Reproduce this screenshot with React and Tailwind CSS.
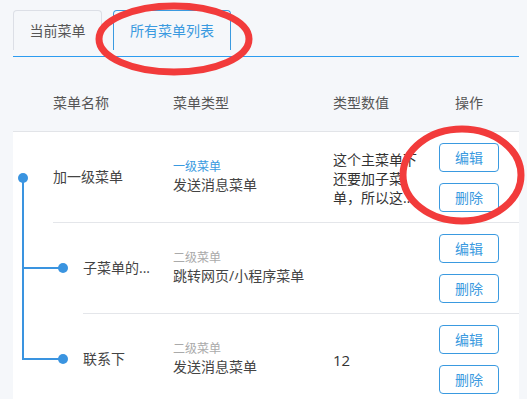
import React from 'react'

const rows = [
    { pad: 40, name: '加一级菜单', level: '一级菜单', levelBlue: true, type: '发送消息菜单', value: '这个主菜单下还要加子菜单，所以这里可以不填写' },
    { pad: 70, name: '子菜单的...', level: '二级菜单', type: '跳转网页/小程序菜单', value: '' },
    { pad: 70, name: '联系下', level: '二级菜单', type: '发送消息菜单', value: '12' },
]

function Tree({ i }) {
    const line = 'absolute w-[2px] bg-[#3a94e0] left-[9px]'
    const dot = 'absolute w-[10px] h-[10px] rounded-full bg-[#3a94e0]'
    if (i === 0) {
        return (
            <>
                <div className={`${line} top-[46px] bottom-0`}></div>
                <div className={`${dot} left-[5px] top-[41px]`}></div>
            </>
        )
    }
    return (
        <>
            <div className={`${line} top-0 ${i === 1 ? 'bottom-0' : 'h-[46px]'}`}></div>
            <div className="absolute h-[2px] bg-[#3a94e0] left-[9px] w-[40px] top-[44px]"></div>
            <div className={`${dot} left-[45px] top-[40px]`}></div>
        </>
    )
}

export default function App() {
    return (
        <div className="relative w-[527px] h-[399px] overflow-hidden bg-[#f5f7fa] pl-[13px] pr-[8px] pt-[10px] font-['Open_Sans','Noto_Sans_CJK_SC',sans-serif] text-[14px] text-[#4a4a4a]">
            <div className="flex gap-[11px] h-[40px]">
                <div className="w-[89px] border border-b-0 border-[#dcdfe6] rounded-t-[4px] flex items-center justify-center text-[#555]">当前菜单</div>
                <div className="w-[118px] border border-b-0 border-[#3a9ae0] rounded-t-[4px] flex items-center justify-center text-[#3a9ae0]">所有菜单列表</div>
            </div>
            <div className="mt-[6px] h-px bg-[#2d9cf0]"></div>

            <div className="h-[75px] pt-[36px] pl-[40px] flex leading-[20px] border-b border-[#e2e4e8] text-[#555]">
                <div className="w-[120px]">菜单名称</div>
                <div className="w-[160px]">菜单类型</div>
                <div className="w-[86px]">类型数值</div>
                <div className="flex-1 text-center">操作</div>
            </div>

            <div className="bg-white">
                {rows.map((r, i) => (
                    <div key={i} className="relative flex" style={{ paddingLeft: r.pad }}>
                        <Tree i={i} />
                        <div className="flex-1 flex h-[91px] border-b border-[#e4e6ea]">
                            <div className="flex items-center leading-[20px] text-[#444]" style={{ width: 160 - r.pad }}>{r.name}</div>
                            <div className="w-[160px] flex flex-col justify-center">
                                <div className={`text-[12px] leading-[16px] ${r.levelBlue ? 'text-[#3a9ae0]' : 'text-[#aaa]'}`}>{r.level}</div>
                                <div className="leading-[20px] text-[#444]">{r.type}</div>
                            </div>
                            <div className="w-[86px] flex items-center text-[#333]">
                                <div className={`leading-[19px] line-clamp-3 mt-[3px] ${i === 2 ? 'text-[15px]' : ''}`}>{r.value}</div>
                            </div>
                            <div className="flex-1 flex flex-col items-center justify-center gap-[11px]">
                                <button className="w-[60px] h-[29px] border border-[#3a9ae0] rounded-[4px] bg-white text-[#3a9ae0] text-[14px]">编辑</button>
                                <button className="w-[60px] h-[29px] border border-[#3a9ae0] rounded-[4px] bg-white text-[#3a9ae0] text-[14px]">删除</button>
                            </div>
                        </div>
                    </div>
                ))}
            </div>

            <svg className="absolute inset-0 pointer-events-none" width="527" height="399">
                <ellipse cx="174" cy="39" rx="75" ry="33" fill="none" stroke="#f23b3b" strokeWidth="7" />
                <ellipse cx="462" cy="175" rx="59" ry="46" fill="none" stroke="#f23b3b" strokeWidth="7" />
            </svg>
        </div>
    )
}
